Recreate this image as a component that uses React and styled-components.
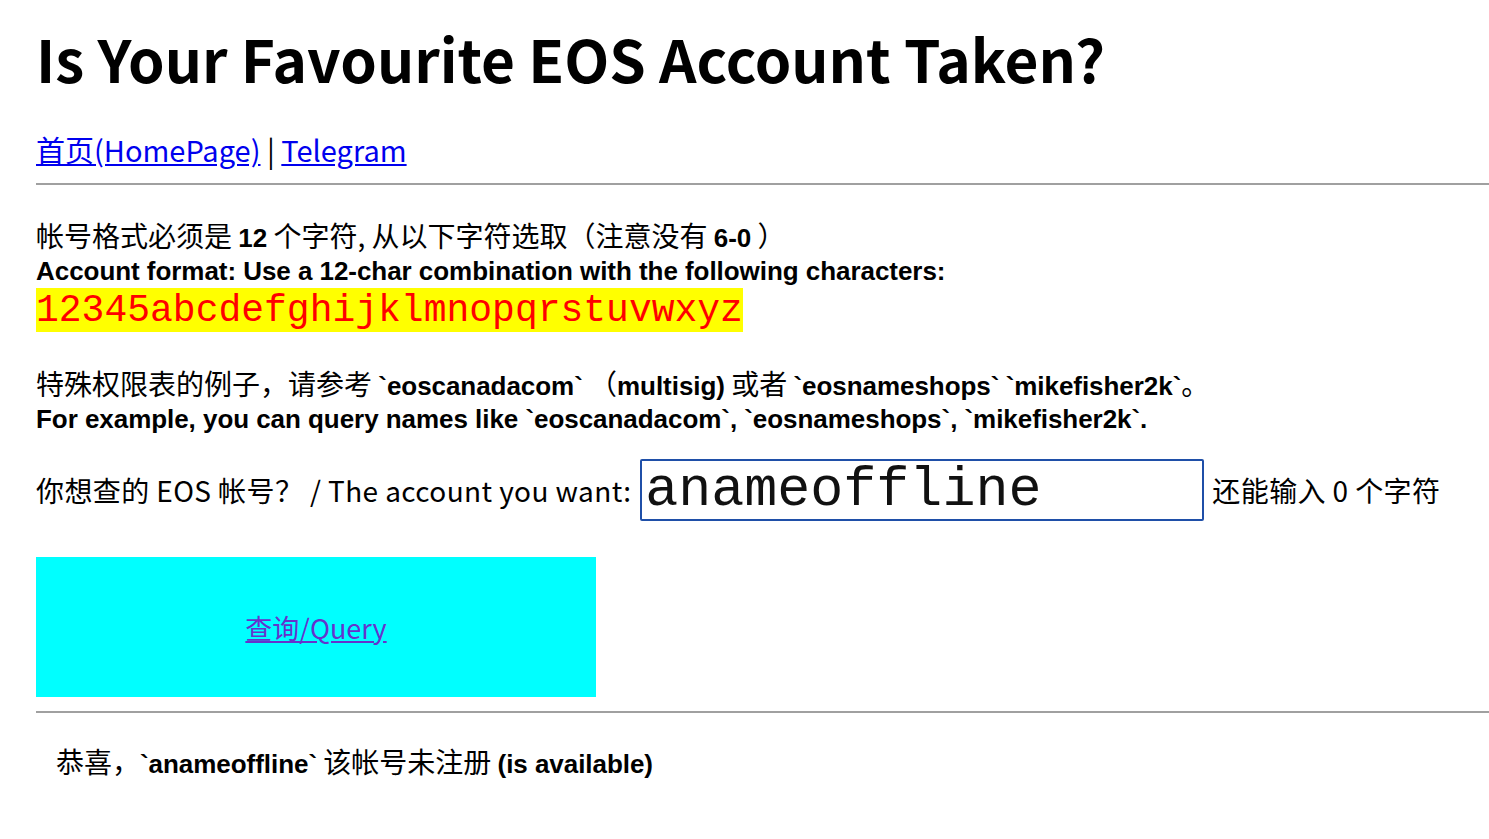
import React from 'react';
import styled, { createGlobalStyle } from 'styled-components';

const GlobalStyle = createGlobalStyle`
  html, body {
    margin: 0;
    padding: 0;
    background: #ffffff;
  }
  body {
    font-family: "Noto Sans CJK SC", "Liberation Sans", sans-serif;
    color: #000;
  }
`;

const Page = styled.div`
  padding: 0 0 0 36px;
`;

const Title = styled.h1`
  margin: 0;
  padding-top: 21px;
  font-family: "Noto Sans CJK SC", "Open Sans", sans-serif;
  font-size: 58.5px;
  font-weight: 700;
  line-height: 74px;
`;

const Nav = styled.div`
  margin-top: 34px;
  font-family: "Noto Sans CJK SC", "Open Sans", sans-serif;
  font-size: 29px;
  line-height: 40px;

  a {
    color: #0000ee;
  }
`;

const Rule = styled.hr`
  margin: ${(p) => p.$top}px 0 0 0;
  border: none;
  border-top: 2px solid #a0a0a0;
  height: 0;
`;

const Bold = styled.b`
  font-family: "Liberation Sans", "Noto Sans CJK SC", sans-serif;
  font-weight: 700;
  font-size: 26px;
  line-height: 20px;
  letter-spacing: -0.05px;
`;

const Block = styled.div`
  margin-top: ${(p) => p.$top}px;
  font-size: 28px;
  line-height: 33px;
`;

const Chars = styled.span`
  display: inline-block;
  margin-top: 3px;
  height: 44px;
  background: #ffff00;
  color: #ff0000;
  font-family: "Liberation Mono", monospace;
  font-size: 38px;
  line-height: 46px;
`;

const QueryRow = styled.div`
  margin-top: 26px;
  display: flex;
  align-items: center;
  font-size: 28px;
  letter-spacing: 0.4px;
  white-space: nowrap;
`;

const AccountInput = styled.input`
  margin: 0 8px 0 9px;
  width: 564px;
  height: 62px;
  box-sizing: border-box;
  border: 2px solid #1f4fa8;
  border-radius: 2px;
  padding: 0 3px;
  font-family: "Liberation Mono", monospace;
  font-size: 55px;
  letter-spacing: 0;
  color: #111;
  outline: none;
`;

const QueryBox = styled.div`
  margin-top: 36px;
  width: 560px;
  height: 140px;
  background: #00ffff;
  display: flex;
  align-items: center;
  justify-content: center;
  font-size: 27px;

  a {
    color: #6633cc;
  }
`;

const Result = styled.div`
  margin-top: 32px;
  padding-left: 20px;
  font-size: 28px;
  line-height: 33px;
`;

export default function App() {
  return (
    <>
      <GlobalStyle />
      <Page>
        <Title>Is Your Favourite EOS Account Taken?</Title>
        <Nav>
          <a href="#home">首页(HomePage)</a> | <a href="#telegram">Telegram</a>
        </Nav>
        <Rule $top={14} />
        <Block $top={34}>
          帐号格式必须是 <Bold>12</Bold> 个字符, 从以下字符选取（注意没有 <Bold>6-0</Bold> ）
          <br />
          <Bold>Account format: Use a 12-char combination with the following characters:</Bold>
          <br />
          <Chars>12345abcdefghijklmnopqrstuvwxyz</Chars>
        </Block>
        <Block $top={35}>
          特殊权限表的例子，请参考 <Bold>`eoscanadacom`</Bold> （<Bold>multisig)</Bold> 或者 <Bold>`eosnameshops`</Bold> <Bold>`mikefisher2k`</Bold>。
          <br />
          <Bold>For example, you can query names like `eoscanadacom`, `eosnameshops`, `mikefisher2k`.</Bold>
        </Block>
        <QueryRow>
          你想查的 EOS 帐号？ / The account you want:
          <AccountInput defaultValue="anameoffline" maxLength={12} />
          还能输入 0 个字符
        </QueryRow>
        <QueryBox>
          <a href="#query">查询/Query</a>
        </QueryBox>
        <Rule $top={14} />
        <Result>
          恭喜，<Bold>`anameoffline`</Bold> 该帐号未注册 <Bold>(is available)</Bold>
        </Result>
      </Page>
    </>
  );
}
